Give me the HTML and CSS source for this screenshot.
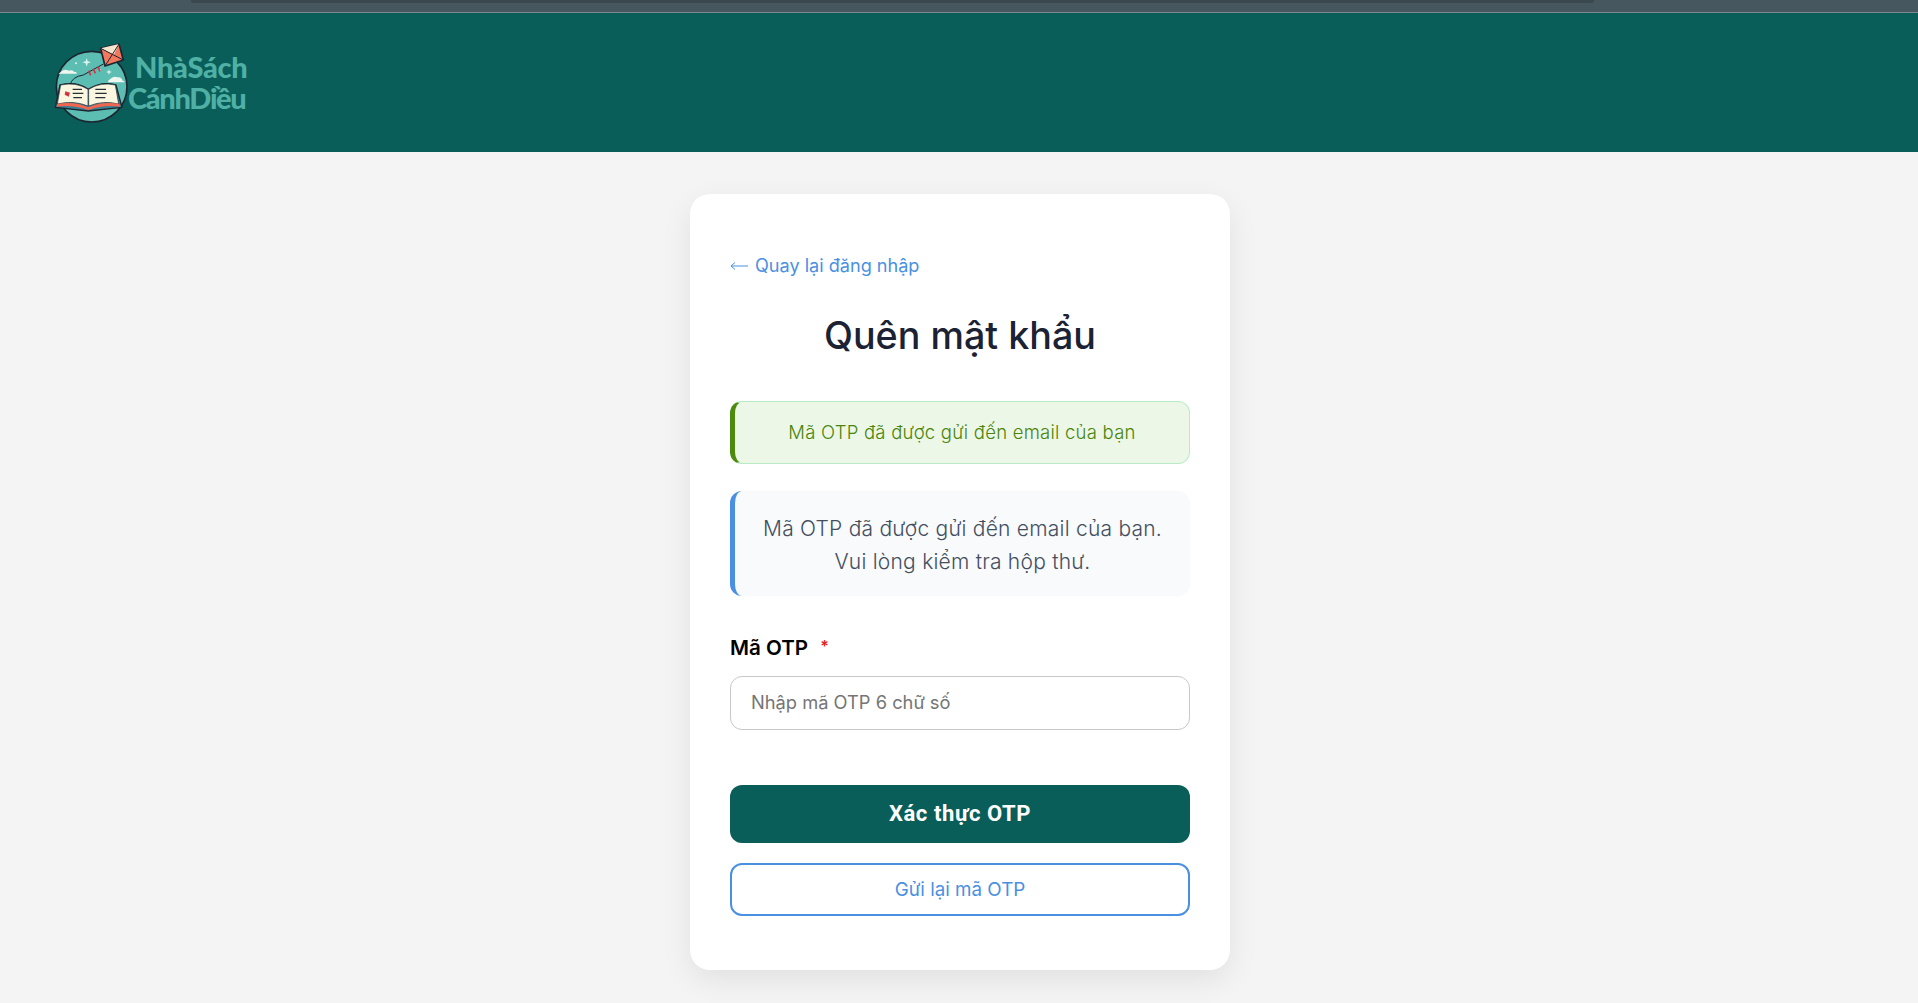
FILE: index.html
```html
<!DOCTYPE html>
<html lang="vi">
<head>
<meta charset="utf-8">
<title>Quên mật khẩu</title>
<link rel="stylesheet" href="styles.css">
</head>
<body>
<div class="chrome-strip"><div class="chrome-bar"></div></div>
<header class="site-header">
  <svg class="logo-mark" viewBox="0 0 270 300" width="90" height="100" aria-hidden="true">
    <circle cx="155" cy="170" r="106" fill="#5cbdb3" stroke="#1c2530" stroke-width="5"/>
    <path d="M60 128q12-14 26-6q10-4 16 3q10 0 8 6H56q0-3 4-3z" fill="#eef6ee"/>
    <path d="M210 148q10-12 22-6q12-3 16 10q6 1 6 5h-50q0-8 6-9z" fill="#eef6ee"/>
    <path d="M140 84l3 10 10 3-10 3-3 10-3-10-10-3 10-3z" fill="#dff3ee"/>
    <path d="M207 117l2 7 7 2-7 2-2 7-2-7-7-2 7-2z" fill="#dff3ee"/>
    <circle cx="108" cy="100" r="3" fill="#dff3ee"/><circle cx="180" cy="120" r="3" fill="#dff3ee"/>
    <path d="M190 102L130 135Q96 140 90 165L84 190" fill="none" stroke="#1c2530" stroke-width="3"/>
    <path d="M146 122l6 14M160 116l6 14M174 110l6 14" stroke="#d5333f" stroke-width="5"/>
    <path d="M182 55L237 42L250 90L195 108Z" fill="#f2785e" stroke="#1c2530" stroke-width="5" stroke-linejoin="round"/>
    <path d="M182 55L237 42L222 74Z" fill="#f8e5cf"/>
    <path d="M182 55L250 90M237 42L195 108" stroke="#1c2530" stroke-width="3"/>
    <path d="M60 165Q110 152 145 178Q185 152 228 165L246 232L145 243L46 232Z" fill="#3d7f92" stroke="#1c2530" stroke-width="4" stroke-linejoin="round"/>
    <path d="M62 165Q108 155 144 178V228Q100 210 52 222Z" fill="#fbf6df" stroke="#1c2530" stroke-width="2"/>
    <path d="M146 178Q182 155 226 165L236 222Q190 210 146 228Z" fill="#fbf6df" stroke="#1c2530" stroke-width="2"/>
    <path d="M52 222Q100 212 145 232Q190 212 238 222L240 230Q190 224 145 240Q100 224 50 230Z" fill="#f2664f"/>
    <path d="M98 178h28M98 190h32M100 203h26M166 178h32M166 190h34M166 203h30" stroke="#26303a" stroke-width="4"/>
    <path d="M76 184l14 4-4 12-12-6z" fill="#d5333f"/>
  </svg>
  <div class="logo-text">
    <span class="logo-line logo-line-top">NhàSách</span>
    <span class="logo-line logo-line-bottom">CánhDiều</span>
  </div>
</header>
<main class="page">
  <section class="card">
    <a class="back-link" href="#"><svg class="back-arrow" viewBox="0 0 18 10" width="18" height="10" aria-hidden="true"><path d="M1 5H18M5 1.5L1 5l4 3.5" fill="none" stroke="currentColor" stroke-width="1"/></svg>Quay lại đăng nhập</a>
    <h1 class="title">Quên mật khẩu</h1>
    <div class="alert">Mã OTP đã được gửi đến email của bạn</div>
    <p class="info">Mã OTP đã được gửi đến email của bạn.<br>Vui lòng kiểm tra hộp thư.</p>
    <label class="field-label" for="otp">Mã OTP <span class="required">*</span></label>
    <input class="field-input" id="otp" type="text" placeholder="Nhập mã OTP 6 chữ số">
    <button class="btn-primary" type="button">Xác thực OTP</button>
    <button class="btn-outline" type="button">Gửi lại mã OTP</button>
  </section>
</main>
</body>
</html>
```
FILE: styles.css
```css
* { box-sizing: border-box; }
html, body { margin: 0; height: 100%; }
body {
  background: #f4f4f4;
  font-family: "Inter", "Liberation Sans", sans-serif;
  overflow: hidden;
}
.chrome-strip {
  height: 13px;
  background: #47575f;
  border-bottom: 1px solid #7d8a90;
  padding-left: 191px;
}
.chrome-bar {
  width: 1403px;
  height: 3px;
  background: #3a474c;
  border-radius: 0 0 8px 8px;
}
.site-header {
  height: 139px;
  background: #095e59;
  display: flex;
  align-items: flex-start;
  padding: 17px 0 0 40px;
}
.logo-mark { flex: none; overflow: visible; }
.logo-text {
  margin: 21px 0 0 -2px;
  display: flex;
  flex-direction: column;
  font-family: "Lato", sans-serif;
  font-weight: 900;
  font-size: 29px;
  line-height: 31px;
  color: #4fb0a5;
}
.logo-line-top { padding-left: 7px; letter-spacing: -.3px; }
.logo-line-bottom { letter-spacing: -1.3px; }
.page { display: flex; justify-content: center; padding: 42px 0 0 2px; }
.card {
  width: 540px;
  height: 776px;
  background: #fff;
  border-radius: 20px;
  box-shadow: 0 10px 30px rgba(0,0,0,.08);
  padding: 60px 40px 0;
  display: flex;
  flex-direction: column;
}
.back-link {
  display: flex;
  align-items: center;
  color: #4a90e2;
  font-family: "Inter", sans-serif;
  font-size: 18.1px;
  line-height: 22px;
  text-decoration: none;
}
.back-arrow { flex: none; margin: 2px 7px 0 0; }
.title {
  margin: 37px 0 0;
  text-align: center;
  font-size: 37.7px;
  line-height: 44px;
  font-weight: 500;
  color: #1a2233;
}
.alert {
  margin-top: 44px;
  height: 63px;
  background: #edf7e7;
  border: 1px solid #b7ebc6;
  border-left: 5px solid #4e8a0e;
  border-radius: 12px;
  color: #4a850b;
  font-size: 18.5px;
  letter-spacing: .24px;
  font-weight: 300;
  padding-bottom: 2px;
  display: flex;
  align-items: center;
  justify-content: center;
}
.info {
  margin: 27px 0 0;
  height: 105px;
  background: #f8fafc;
  border-left: 5px solid #4a90e2;
  border-radius: 12px;
  color: #434e60;
  font-size: 21px;
  letter-spacing: .23px;
  font-weight: 300;
  line-height: 33px;
  text-align: center;
  padding: 21px 0 0;
}
.field-label {
  margin-top: 37px;
  font-size: 20.6px;
  line-height: 26px;
  font-weight: 600;
  color: #000;
}
.required { color: #e02424; margin-left: 7px; font-size: 16px; vertical-align: 3px; }
.field-input {
  margin-top: 15px;
  height: 54px;
  width: 100%;
  border: 1px solid #c8c8c8;
  border-radius: 12px;
  padding: 0 20px 2px;
  font-family: "Inter", sans-serif;
  font-size: 18.3px;
  background: #fff;
}
.field-input::placeholder { color: #757575; opacity: 1; }
.btn-primary {
  margin-top: 55px;
  height: 58px;
  background: #095e59;
  color: #fff;
  border: 0;
  border-radius: 12px;
  font-family: "Roboto", sans-serif;
  font-weight: 700;
  font-size: 22px;
  letter-spacing: .6px;
  padding-bottom: 2px;
}
.btn-outline {
  margin-top: 20px;
  height: 53px;
  background: #fff;
  color: #4a90e2;
  border: 2px solid #4a90e2;
  border-radius: 12px;
  font-family: "Inter", sans-serif;
  font-size: 18.8px;
}
```
